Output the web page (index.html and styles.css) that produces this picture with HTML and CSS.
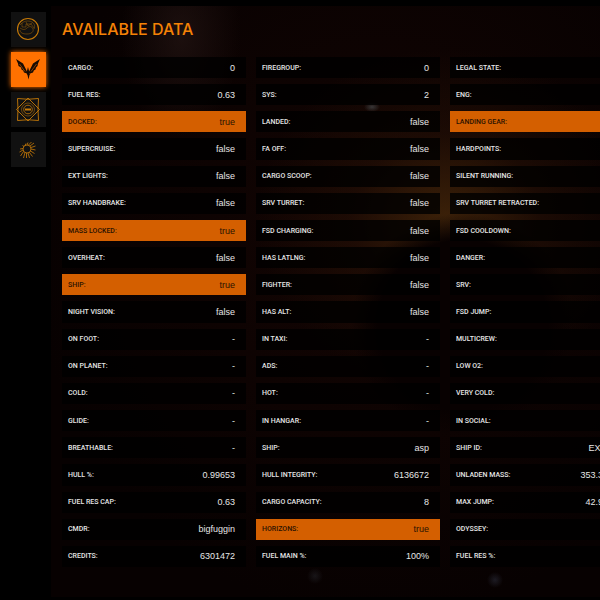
FILE: index.html
```html
<!DOCTYPE html>
<html lang="en">
<head>
<meta charset="utf-8">
<title>Available Data</title>
<link rel="stylesheet" href="styles.css">
</head>
<body>
<div class="app">
  <nav class="rail" aria-label="Panels">
    <button class="tab" type="button" aria-label="Galaxy">
      <svg viewBox="0 0 35 35" fill="none" stroke="currentColor" stroke-width=".5">
        <circle cx="17" cy="17" r="10.500" stroke-width="1.100"/>
        <path d="M9 13c3-4 8-5 12-3 3 2 3 5 2 7M9 16c3 2 5 2 7 0s5-2 6 1-2 5-6 5-7-1-7-4M11 11v4h4v-3h5l3 4M15 10l2 4 4-3" opacity=".8"/>
      </svg>
    </button>
    <button class="tab tab-active" type="button" aria-label="Status" aria-current="page">
      <svg viewBox="0 0 35 35" fill="currentColor">
        <path d="M5 7l7 4.500 3 6 .8 2 1.200-4.500 1.200 4.500.8-2 3-6L29 7l-2 4.500-.5 2.500-1.500 1.500-.5 2-1.700 1-.8 2-2.300.8-1.200 1.700-1 4.500-1-4.500-1.200-1.700-2.300-.8-.8-2-1.700-1-.5-2L7.500 14 7 11.500z"/>
        <path d="M8.500 12l5.500 7.500M25.500 12L20 19.500M14.500 21l1 1M19.500 21l-1 1" fill="none" stroke="#ff7100" stroke-width=".5"/>
      </svg>
    </button>
    <button class="tab" type="button" aria-label="Engineering">
      <svg viewBox="0 0 35 35" fill="none" stroke="currentColor" stroke-width=".9">
        <path d="M6.500 6.500Q17 8 27.500 6.500 26.500 17.500 27.500 28.500 17 27 6.500 28.500 7.500 17.500 6.500 6.500z"/>
        <path d="M17 6l11.500 11.500L17 29 5.500 17.500z"/>
        <circle cx="17" cy="17.500" r="6.500" stroke-width=".5"/>
        <circle cx="17" cy="17.500" r="4.300" stroke-width=".8"/>
        <path d="M14 17.500h6" stroke-width="2"/>
      </svg>
    </button>
    <button class="tab" type="button" aria-label="Settings">
      <svg viewBox="0 0 35 35" fill="none" stroke="currentColor" stroke-width=".8">
        <circle cx="16" cy="17" r="4" stroke-width=".8"/>
        <path d="M20 17l4.500 1M19.500 19l4 2.500M18.500 20.500l3 4M17 21l1.500 5M15.500 21v5M14 20.500L12.500 26M12.500 19.500L9.500 24M12 18l-3.500 2M12 16.500l-3 .5M20 15.500l4.500-1.500M19 14l4-3M17.500 13l3-3M16 13l1-2.500M14 13.500l1-2M13 14.500l-1.500-1"/>
      </svg>
    </button>
  </nav>
  <main class="panel">
    <h1 class="title">AVAILABLE DATA</h1>
    <dl class="grid">
      <div class="cell"><dt>CARGO:</dt><dd>0</dd></div>
      <div class="cell"><dt>FIREGROUP:</dt><dd>0</dd></div>
      <div class="cell"><dt>LEGAL STATE:</dt><dd></dd></div>
      <div class="cell"><dt>FUEL RES:</dt><dd>0.63</dd></div>
      <div class="cell"><dt>SYS:</dt><dd>2</dd></div>
      <div class="cell"><dt>ENG:</dt><dd></dd></div>
      <div class="cell on"><dt>DOCKED:</dt><dd>true</dd></div>
      <div class="cell"><dt>LANDED:</dt><dd>false</dd></div>
      <div class="cell on"><dt>LANDING GEAR:</dt><dd></dd></div>
      <div class="cell"><dt>SUPERCRUISE:</dt><dd>false</dd></div>
      <div class="cell"><dt>FA OFF:</dt><dd>false</dd></div>
      <div class="cell"><dt>HARDPOINTS:</dt><dd></dd></div>
      <div class="cell"><dt>EXT LIGHTS:</dt><dd>false</dd></div>
      <div class="cell"><dt>CARGO SCOOP:</dt><dd>false</dd></div>
      <div class="cell"><dt>SILENT RUNNING:</dt><dd></dd></div>
      <div class="cell"><dt>SRV HANDBRAKE:</dt><dd>false</dd></div>
      <div class="cell"><dt>SRV TURRET:</dt><dd>false</dd></div>
      <div class="cell"><dt>SRV TURRET RETRACTED:</dt><dd></dd></div>
      <div class="cell on"><dt>MASS LOCKED:</dt><dd>true</dd></div>
      <div class="cell"><dt>FSD CHARGING:</dt><dd>false</dd></div>
      <div class="cell"><dt>FSD COOLDOWN:</dt><dd></dd></div>
      <div class="cell"><dt>OVERHEAT:</dt><dd>false</dd></div>
      <div class="cell"><dt>HAS LATLNG:</dt><dd>false</dd></div>
      <div class="cell"><dt>DANGER:</dt><dd></dd></div>
      <div class="cell on"><dt>SHIP:</dt><dd>true</dd></div>
      <div class="cell"><dt>FIGHTER:</dt><dd>false</dd></div>
      <div class="cell"><dt>SRV:</dt><dd></dd></div>
      <div class="cell"><dt>NIGHT VISION:</dt><dd>false</dd></div>
      <div class="cell"><dt>HAS ALT:</dt><dd>false</dd></div>
      <div class="cell"><dt>FSD JUMP:</dt><dd></dd></div>
      <div class="cell"><dt>ON FOOT:</dt><dd>-</dd></div>
      <div class="cell"><dt>IN TAXI:</dt><dd>-</dd></div>
      <div class="cell"><dt>MULTICREW:</dt><dd></dd></div>
      <div class="cell"><dt>ON PLANET:</dt><dd>-</dd></div>
      <div class="cell"><dt>ADS:</dt><dd>-</dd></div>
      <div class="cell"><dt>LOW O2:</dt><dd></dd></div>
      <div class="cell"><dt>COLD:</dt><dd>-</dd></div>
      <div class="cell"><dt>HOT:</dt><dd>-</dd></div>
      <div class="cell"><dt>VERY COLD:</dt><dd></dd></div>
      <div class="cell"><dt>GLIDE:</dt><dd>-</dd></div>
      <div class="cell"><dt>IN HANGAR:</dt><dd>-</dd></div>
      <div class="cell"><dt>IN SOCIAL:</dt><dd></dd></div>
      <div class="cell"><dt>BREATHABLE:</dt><dd>-</dd></div>
      <div class="cell"><dt>SHIP:</dt><dd>asp</dd></div>
      <div class="cell"><dt>SHIP ID:</dt><dd>EX-BF-1</dd></div>
      <div class="cell"><dt>HULL %:</dt><dd>0.99653</dd></div>
      <div class="cell"><dt>HULL INTEGRITY:</dt><dd>6136672</dd></div>
      <div class="cell"><dt>UNLADEN MASS:</dt><dd>353.30001</dd></div>
      <div class="cell"><dt>FUEL RES CAP:</dt><dd>0.63</dd></div>
      <div class="cell"><dt>CARGO CAPACITY:</dt><dd>8</dd></div>
      <div class="cell"><dt>MAX JUMP:</dt><dd>42.94988</dd></div>
      <div class="cell"><dt>CMDR:</dt><dd>bigfuggin</dd></div>
      <div class="cell on"><dt>HORIZONS:</dt><dd>true</dd></div>
      <div class="cell"><dt>ODYSSEY:</dt><dd></dd></div>
      <div class="cell"><dt>CREDITS:</dt><dd>6301472</dd></div>
      <div class="cell"><dt>FUEL MAIN %:</dt><dd>100%</dd></div>
      <div class="cell"><dt>FUEL RES %:</dt><dd></dd></div>
    </dl>
  </main>
</div>
</body>
</html>
```
FILE: styles.css
```css
* { box-sizing: border-box; }

body {
  margin: 0;
  background: #000;
  color: #e6e6e6;
  font-family: "Liberation Sans", Arial, sans-serif;
  overflow: hidden;
}

.app {
  display: flex;
  min-height: 100vh;
  padding: 6px 0 3px;
}

.rail {
  display: flex;
  flex-direction: column;
  gap: 5px;
  flex: none;
  padding: 6px 5px 0 11px;
}

.tab {
  width: 35px;
  height: 35px;
  padding: 0;
  border: 0;
  background: #111;
  color: #c67a08;
}

.tab svg {
  display: block;
  width: 35px;
  height: 35px;
}

.tab-active {
  background: #ff7100;
  color: #170b03;
  box-shadow: 0 0 5px #ff7100;
}

.panel {
  flex: 1;
  min-width: 0;
  display: flex;
  flex-direction: column;
  padding: 13px 0 30px 11px;
  background:
    radial-gradient(circle at 75% 54%, #080101 0 85px, transparent 112px),
    radial-gradient(ellipse 8px 5px at 321px 101px, rgba(90, 100, 105, .5), transparent),
    radial-gradient(ellipse 8px 8px at 444px 574px, rgba(60, 65, 85, .4), transparent),
    radial-gradient(ellipse 8px 8px at 264px 570px, rgba(60, 65, 75, .3), transparent),
    radial-gradient(ellipse 190px 170px at 72% 36%, rgba(70, 40, 10, .8), rgba(40, 18, 6, .5) 50%, transparent),
    radial-gradient(ellipse 60px 100px at 130px 30px, rgba(40, 24, 22, .6), transparent),
    radial-gradient(ellipse at 60% 40%, #140503, #070101 75%);
}

.title {
  margin: 0 0 18px;
  color: #f58206;
  font-family: Inter, "Liberation Sans", sans-serif;
  font-size: 16px;
  line-height: 20px;
  font-weight: 500;
}

.grid {
  flex: 1;
  display: grid;
  grid-template-columns: repeat(3, minmax(184px, 1fr));
  grid-auto-rows: 1fr;
  gap: 6px 10px;
  margin: 0;
}

.cell {
  display: flex;
  align-items: center;
  justify-content: space-between;
  padding: 0 11px 0 6px;
  background: rgba(0, 0, 0, .8);
  white-space: nowrap;
}

.cell dt {
  font-family: Roboto, "Liberation Sans", sans-serif;
  font-size: 7px;
  line-height: 10px;
  font-weight: 500;
}

.cell dd {
  margin: 0;
  font-size: 9px;
  line-height: 10px;
}

.on {
  background: #d45f00;
  color: #2b1200;
}
```
